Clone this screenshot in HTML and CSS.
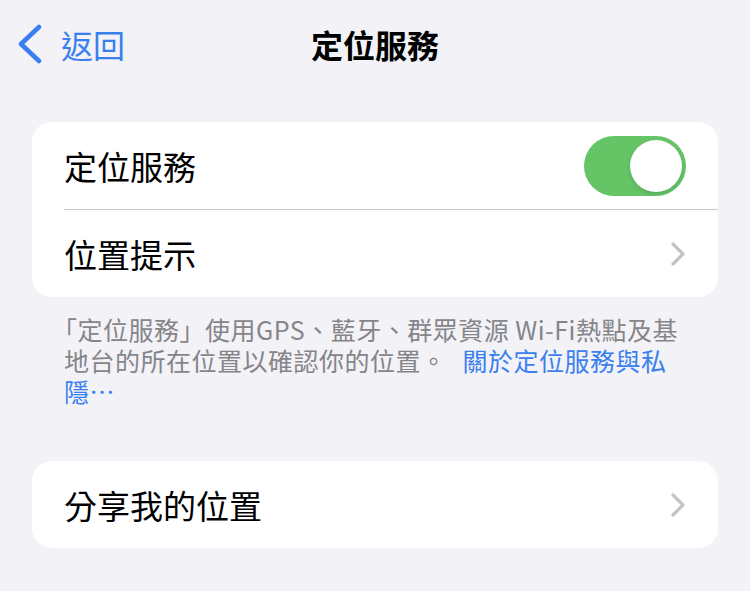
FILE: index.html
```html
<!DOCTYPE html>
<html lang="zh-Hant">
<head>
  <meta charset="UTF-8">
  <meta name="viewport" content="width=device-width, initial-scale=1.0">
  <title>定位服務</title>
  <link rel="stylesheet" href="styles.css">
</head>
<body>
  <header class="navbar">
    <a href="#" class="back">
      <svg class="back-icon" width="26" height="40" viewBox="0 0 26 40">
        <polyline points="22,3 4,20 22,37" fill="none" stroke="#3a7ff0" stroke-width="4.5" stroke-linecap="round" stroke-linejoin="round"/>
      </svg>
      <span>返回</span>
    </a>
    <h1 class="title">定位服務</h1>
    <span></span>
  </header>

  <main class="content">
    <section class="card">
      <div class="row">
        <span class="row-label">定位服務</span>
        <span class="switch on"><span class="knob"></span></span>
      </div>
      <div class="row">
        <span class="row-label">位置提示</span>
        <svg class="chevron" width="18" height="28" viewBox="0 0 18 28">
          <polyline points="4,4 14,14 4,24" fill="none" stroke="#c4c4c7" stroke-width="3.2" stroke-linecap="round" stroke-linejoin="round"/>
        </svg>
      </div>
    </section>

    <p class="note">「定位服務」使用GPS、藍牙、群眾資源 Wi-Fi熱點及基地台的所在位置以確認你的位置。&ensp;<a href="#">關於定位服務與私隱⋯</a></p>

    <section class="card">
      <div class="row">
        <span class="row-label">分享我的位置</span>
        <svg class="chevron" width="18" height="28" viewBox="0 0 18 28">
          <polyline points="4,4 14,14 4,24" fill="none" stroke="#c4c4c7" stroke-width="3.2" stroke-linecap="round" stroke-linejoin="round"/>
        </svg>
      </div>
    </section>
  </main>
</body>
</html>
```

FILE: styles.css
```css
body {
  margin: 0;
  padding: 0;
  background-color: #f2f2f7;
  font-family: "Noto Sans CJK TC", "Noto Sans", sans-serif;
  color: #000;
}
.navbar {
  display: grid;
  grid-template-columns: 1fr auto 1fr;
  align-items: center;
  height: 88px;
}
.back {
  display: flex;
  align-items: center;
  gap: 18px;
  padding-left: 17px;
  color: #3a7ff0;
  text-decoration: none;
  font-size: 32px;
}
.back-icon {
  flex-shrink: 0;
}
.title {
  margin: 0;
  font-size: 32px;
  font-weight: 700;
}
.content {
  padding: 34px 32px 0;
}
.card {
  background-color: white;
  border-radius: 20px;
  overflow: hidden;
}
.row {
  display: flex;
  align-items: center;
  justify-content: space-between;
  height: 87px;
  margin-left: 32px;
  padding-right: 32px;
  font-size: 33px;
}
.row + .row {
  border-top: 1px solid #c8c8ca;
}
.switch {
  position: relative;
  width: 102px;
  height: 60px;
  border-radius: 30px;
  background-color: #e9e9ea;
}
.switch.on {
  background-color: #64c466;
}
.knob {
  position: absolute;
  top: 4px;
  right: 4px;
  width: 52px;
  height: 52px;
  border-radius: 50%;
  background-color: white;
  box-shadow: 0 2px 4px rgba(0, 0, 0, 0.12);
}
.chevron {
  margin-right: -1px;
}
.note {
  margin: 17px 0 54px;
  padding: 0 27px 0 32px;
  font-size: 25px;
  line-height: 31px;
  letter-spacing: 0.5px;
  text-indent: -12px;
  color: #85858a;
}
.note a {
  margin-left: 3px;
  color: #3a7ff0;
  text-decoration: none;
}
```
